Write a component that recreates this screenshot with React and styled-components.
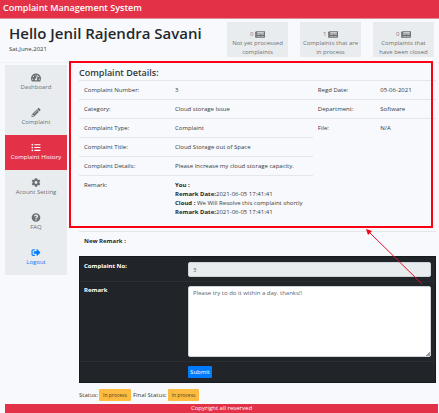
import React from 'react';
import styled, { createGlobalStyle, css } from 'styled-components';
import {
  FaTachometerAlt,
  FaPencilAlt,
  FaListUl,
  FaCog,
  FaQuestionCircle,
  FaSignOutAlt,
  FaNewspaper,
} from 'react-icons/fa';

const GlobalStyle = createGlobalStyle`
  *, *::before, *::after { box-sizing: border-box; }
  body {
    margin: 0;
    background: #f8f9fc;
    color: #343a40;
    font: 6px/9px "Open Sans", "Noto Sans", sans-serif;
  }
  b { font-weight: 700; color: #24282c; }
`;

const Page = styled.div`
  position: relative;
  display: flex;
  flex-direction: column;
  min-height: 100vh;
  overflow: hidden;
`;

const TopBar = styled.header`
  padding: 0 3px 3px;
  background: #e33247;
  border-bottom: 1px solid #dd8c98;
  color: #fff;
  font-size: 9px;
  font-weight: 600;
  line-height: 15px;
`;

const Intro = styled.section`
  display: flex;
  justify-content: space-between;
  align-items: flex-start;
  padding: 3px 5px 5px 9px;
  border-bottom: 1px solid #f0f2f4;
`;

const Greeting = styled.h1`
  margin: 0;
  color: #24282c;
  font-size: 15px;
  font-weight: 600;
  line-height: 22px;
  white-space: nowrap;
`;

const Today = styled.p`
  margin: 1px 0 0;
`;

const Counters = styled.div`
  display: flex;
  gap: 12px;
`;

const Counter = styled.div`
  width: 61px;
  padding-top: 8px;
  background: #e9ecef;
  color: #6c7074;
  font-size: 6px;
  text-align: center;
  white-space: nowrap;

  svg {
    width: 10px;
    height: 9px;
    margin: -1px 0;
    vertical-align: -2px;
  }
`;

const Columns = styled.div`
  display: flex;
  align-items: flex-start;
  gap: 12px;
  flex: 1;
  padding: 2px 3px 0 5px;
`;

const Sidebar = styled.nav`
  flex: 0 0 62px;
  display: flex;
  flex-direction: column;
  background: #e9ecef;
`;

const SideLink = styled.a`
  display: flex;
  flex-direction: column;
  align-items: center;
  gap: 1px;
  height: 35px;
  padding-top: 8px;
  color: #6c7074;
  font-size: 6px;
  text-decoration: none;
  white-space: nowrap;

  svg {
    width: 10px;
    height: 9px;
  }

  ${({ $tone }) => $tone === 'active' && css`
    background: #e33247;
    color: #fff;
  `}
  ${({ $tone }) => $tone === 'link' && css`
    color: #007bff;
  `}
`;

const Content = styled.main`
  flex: 1;
  min-width: 0;
`;

const Details = styled.section`
  position: relative;
`;

const Highlight = styled.div`
  position: absolute;
  inset: -4px 3px 3px -10px;
  border: 2px solid #fa0014;
  pointer-events: none;
`;

const Pointer = styled.svg`
  position: absolute;
  right: 13px;
  top: 100%;
  width: 57px;
  height: 55px;
  overflow: visible;
  pointer-events: none;
`;

const Heading = styled.h2`
  margin: 0;
  color: #343a40;
  font-size: 9px;
  font-weight: 600;
  line-height: 15px;
`;

const DetailTable = styled.table`
  width: 100%;
  border-spacing: 0;
  table-layout: fixed;

  th, td {
    padding: 5px 5px 4px;
    border-top: 1px solid #e4e7ea;
    font-weight: 400;
    text-align: left;
    vertical-align: top;
    white-space: nowrap;
  }

  tr:last-child > * {
    padding-bottom: 14px;
  }
`;

const Col = styled.col`
  width: ${({ $share }) => $share}%;
`;

const NewRemark = styled.h3`
  margin: 0;
  padding: 5px 5px 10px;
  border-top: 1px solid #e4e7ea;
  color: #24282c;
  font-size: 6px;
  font-weight: 700;
  line-height: 9px;
`;

const RemarkForm = styled.form`
  background: #212529;
  border: 1px solid #181b1e;
  color: #fff;
`;

const FormRow = styled.div`
  display: grid;
  grid-template-columns: 3fr 7fr;
  padding: 4px;
  border-top: 1px solid ${({ $first }) => ($first ? 'transparent' : '#2b2f34')};
`;

const Label = styled.label`
  font-weight: 700;
`;

const field = css`
  display: block;
  width: 100%;
  border: 1px solid #ced4da;
  border-radius: 2px;
  padding: 2px 4px;
  color: #5c6166;
  font: inherit;
  outline: 0;
`;

const TextInput = styled.input`
  ${field}
  height: 15px;
  background: #e9ecef;
`;

const TextArea = styled.textarea`
  ${field}
  height: 71px;
  background: #fff;
  resize: vertical;

  &::-webkit-resizer {
    background: linear-gradient(135deg, transparent 85%, #9a9da0 85%);
  }
`;

const SubmitButton = styled.button`
  grid-column: 2;
  justify-self: start;
  height: 12px;
  padding: 0 2px;
  border: 0;
  border-radius: 1px;
  background: #007bff;
  color: #fff;
  font: inherit;
`;

const StatusLine = styled.div`
  display: flex;
  align-items: center;
  gap: 1px;
  padding: 6px 0 2px;
  font-size: 6px;
`;

const Badge = styled.span`
  margin-right: 1px;
  padding: 2px 4px 1px;
  border-radius: 1px;
  background: #fdbb3f;
  color: #4d4029;
  font-size: 5px;
`;

const Footer = styled.footer`
  margin: 0 1px 0 5px;
  background: #e33247;
  color: #fff;
  font-size: 6px;
  line-height: 9px;
  text-align: center;
`;

const counters = [
  { count: 0, lines: ['Not yet processed', 'complaints'] },
  { count: 1, lines: ['Complaints that are', 'in process'] },
  { count: 0, lines: ['Complaints that', 'have been closed'] },
];

const links = [
  { label: 'Dashboard', Icon: FaTachometerAlt },
  { label: 'Complaint', Icon: FaPencilAlt },
  { label: 'Complaint History', Icon: FaListUl, tone: 'active' },
  { label: 'Acount Setting', Icon: FaCog },
  { label: 'FAQ', Icon: FaQuestionCircle },
  { label: 'Logout', Icon: FaSignOutAlt, tone: 'link' },
];

const rows = [
  ['Complaint Number:', '3', 'Regd Date:', '05-06-2021'],
  ['Category:', 'Cloud storage Issue', 'Department:', 'Software'],
  ['Complaint Type:', 'Complaint', 'File:', 'N/A'],
  ['Complaint Title:', 'Cloud Storage out of Space'],
  ['Complaint Details:', 'Please Increase my cloud storage capacity.'],
];

export default function App() {
  return (
    <Page>
      <GlobalStyle />
      <TopBar>Complaint Management System</TopBar>
      <Intro>
        <div>
          <Greeting>Hello Jenil Rajendra Savani</Greeting>
          <Today>Sat,June,2021</Today>
        </div>
        <Counters>
          {counters.map(({ count, lines }) => (
            <Counter key={lines[0]}>
              {count} <FaNewspaper />
              <br />
              {lines[0]}
              <br />
              {lines[1]}
            </Counter>
          ))}
        </Counters>
      </Intro>
      <Columns>
        <Sidebar>
          {links.map(({ label, Icon, tone }) => (
            <SideLink key={label} href="#" $tone={tone}>
              <Icon />
              {label}
            </SideLink>
          ))}
        </Sidebar>
        <Content>
          <Details>
            <Heading>Complaint Details:</Heading>
            <DetailTable>
              <colgroup>
                <Col $share={25.5} />
                <Col $share={40} />
                <Col $share={17.5} />
                <Col $share={17} />
              </colgroup>
              <tbody>
                {rows.map(([name, value, name2, value2]) => (
                  <tr key={name}>
                    <th scope="row">{name}</th>
                    <td>{value}</td>
                    {name2 && <th scope="row">{name2}</th>}
                    {name2 && <td>{value2}</td>}
                  </tr>
                ))}
                <tr>
                  <th scope="row">Remark:</th>
                  <td>
                    <b>You :</b>
                    <br />
                    <b>Remark Date:</b>2021-06-05 17:41:41
                    <br />
                    <b>Cloud :</b> We Will Resolve this complaint shortly
                    <br />
                    <b>Remark Date:</b>2021-06-05 17:41:41
                  </td>
                </tr>
              </tbody>
            </DetailTable>
            <Highlight />
            <Pointer viewBox="0 0 57 55" aria-hidden="true">
              <path d="M3 1 56 53" fill="none" stroke="#d9142a" strokeWidth="1" />
              <path d="M0-2 6 0 2 4Z" fill="#fa0014" />
            </Pointer>
          </Details>
          <NewRemark>New Remark :</NewRemark>
          <RemarkForm onSubmit={(event) => event.preventDefault()}>
            <FormRow $first>
              <Label htmlFor="complaint-no">Complaint No:</Label>
              <TextInput id="complaint-no" defaultValue="3" readOnly />
            </FormRow>
            <FormRow>
              <Label htmlFor="remark">Remark</Label>
              <TextArea id="remark" defaultValue="Please try to do it within a day. thanks!!" />
            </FormRow>
            <FormRow>
              <SubmitButton type="submit">Submit</SubmitButton>
            </FormRow>
          </RemarkForm>
          <StatusLine>
            Status: <Badge>In process</Badge> Final Status: <Badge>In process</Badge>
          </StatusLine>
        </Content>
      </Columns>
      <Footer>Copyright all reserved</Footer>
    </Page>
  );
}
